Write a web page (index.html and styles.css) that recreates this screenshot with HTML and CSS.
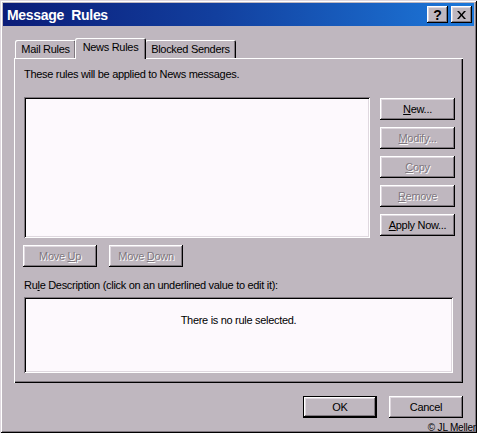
FILE: index.html
```html
<!DOCTYPE html>
<html>
<head>
<meta charset="utf-8">
<title>Message Rules</title>
<link rel="stylesheet" href="styles.css">
</head>
<body>
<div class="window">
  <div class="titlebar">
    <span class="title">Message&nbsp; Rules</span>
    <div class="title-btns">
      <span class="tbtn">?</span>
      <span class="tbtn close">
        <svg width="9" height="8" viewBox="0 0 9 8"><path d="M0 0h2l2.5 3 2.5-3h2l-3.5 4 3.5 4h-2l-2.5-3-2.5 3h-2l3.5-4z" fill="#000"/></svg>
      </span>
    </div>
  </div>
  <div class="content">
    <div class="tabs">
      <div class="tab tab-mail">Mail Rules</div>
      <div class="tab tab-news active">News Rules</div>
      <div class="tab tab-blocked">Blocked Senders</div>
    </div>
    <div class="panel">
      <p class="intro">These rules will be applied to News messages.</p>
      <div class="rules-row">
        <div class="listbox"></div>
        <div class="side-btns">
          <button class="btn"><u>N</u>ew...</button>
          <button class="btn disabled"><u>M</u>odify...</button>
          <button class="btn disabled"><u>C</u>opy</button>
          <button class="btn disabled"><u>R</u>emove</button>
          <button class="btn"><u>A</u>pply Now...</button>
        </div>
      </div>
      <div class="move-row">
        <button class="btn disabled">Move <u>U</u>p</button>
        <button class="btn disabled">Move <u>D</u>own</button>
      </div>
      <p class="desc-label">Ru<u>l</u>e Description (click on an underlined value to edit it):</p>
      <div class="descbox">There is no rule selected.</div>
    </div>
    <div class="footer">
      <button class="btn default">OK</button>
      <button class="btn">Cancel</button>
    </div>
  </div>
  <span class="copyright">© JL Meller</span>
</div>
</body>
</html>
```

FILE: styles.css
```css
* { box-sizing: border-box; }

html, body {
  margin: 0;
  padding: 0;
  background: #bfb7bf;
}

body {
  font-family: "Liberation Sans", Arial, sans-serif;
  font-size: 11px;
  letter-spacing: -0.3px;
  color: #000;
}

.window {
  position: relative;
  width: 477px;
  height: 433px;
  padding: 3px;
  background: #bfb7bf;
  box-shadow: inset 1px 1px #dfd8df, inset -1px -1px #000,
              inset 2px 2px #fff, inset -2px -2px #7f787f;
}

.titlebar {
  height: 23px;
  display: flex;
  align-items: center;
  justify-content: space-between;
  padding: 0 2px 0 4px;
  background: linear-gradient(to right, #0b1c78 0%, #123f9e 45%, #1d78da 100%);
}

.title {
  color: #fff;
  font-weight: bold;
  font-size: 14px;
  letter-spacing: -0.3px;
}

.title-btns {
  display: flex;
  gap: 3px;
}

.tbtn {
  width: 21px;
  height: 17px;
  display: flex;
  align-items: center;
  justify-content: center;
  background: #bfb7bf;
  font-weight: bold;
  font-size: 14px;
  letter-spacing: 0;
  box-shadow: inset -1px -1px #000, inset 1px 1px #fff,
              inset -2px -2px #7f787f, inset 2px 2px #dfd8df;
}

.content {
  padding: 12px 11px 0 11px;
}

.tabs {
  display: flex;
  height: 20px;
  align-items: flex-end;
  padding-left: 1px;
  position: relative;
  z-index: 1;
}

.tab {
  height: 18px;
  display: flex;
  align-items: center;
  justify-content: center;
  border-radius: 2px 2px 0 0;
  background: #bfb7bf;
  box-shadow: inset 1px 1px #fff, inset -1px 0 #000, inset -2px 0 #7f787f;
}

.tab-mail { width: 61px; }
.tab-news { width: 71px; margin: 0 -1px; }
.tab-blocked { width: 91px; }

.tab.active {
  height: 21px;
  margin-bottom: -1px;
  position: relative;
  z-index: 2;
  padding-bottom: 3px;
}

.panel {
  height: 325px;
  padding: 10px 8px 0 10px;
  box-shadow: inset 1px 1px #fff, inset -1px -1px #000, inset -2px -2px #7f787f;
}

.intro {
  margin: 0;
  height: 13px;
  line-height: 13px;
}

.rules-row {
  display: flex;
  margin-top: 16px;
  gap: 10px;
}

.listbox {
  width: 346px;
  height: 141px;
  background: #fdf9fd;
  box-shadow: inset 1px 1px #7f787f, inset -1px -1px #fff,
              inset 2px 2px #000, inset -2px -2px #dfd8df;
}

.side-btns {
  display: flex;
  flex-direction: column;
  gap: 7px;
  padding-top: 1px;
}

.btn {
  width: 75px;
  height: 22px;
  padding: 0;
  border: none;
  background: #bfb7bf;
  font-family: inherit;
  font-size: 11px;
  letter-spacing: -0.3px;
  color: #000;
  box-shadow: inset -1px -1px #000, inset 1px 1px #fff,
              inset -2px -2px #7f787f, inset 2px 2px #dfd8df;
}

.btn.disabled {
  color: #7f787f;
  text-shadow: 1px 1px #fff;
}

.move-row {
  display: flex;
  gap: 12px;
  margin-top: 7px;
  margin-left: -1px;
}

.move-row .btn { width: 74px; }

.desc-label {
  margin: 12px 0 0;
  height: 13px;
  line-height: 13px;
}

.descbox {
  margin-top: 5px;
  width: 429px;
  height: 76px;
  padding-top: 17px;
  text-align: center;
  background: #fdf9fd;
  box-shadow: inset 1px 1px #7f787f, inset -1px -1px #fff,
              inset 2px 2px #000, inset -2px -2px #dfd8df;
}

.footer {
  display: flex;
  justify-content: flex-end;
  gap: 12px;
  margin-top: 13px;
}

.footer .btn { width: 74px; }

.btn.default {
  box-shadow: inset 0 0 0 1px #000, inset -2px -2px #000, inset 2px 2px #fff,
              inset -3px -3px #7f787f, inset 3px 3px #dfd8df;
}

.copyright {
  position: absolute;
  right: 1px;
  bottom: 0;
  font-size: 10px;
  line-height: 11px;
  letter-spacing: -0.2px;
}
```
